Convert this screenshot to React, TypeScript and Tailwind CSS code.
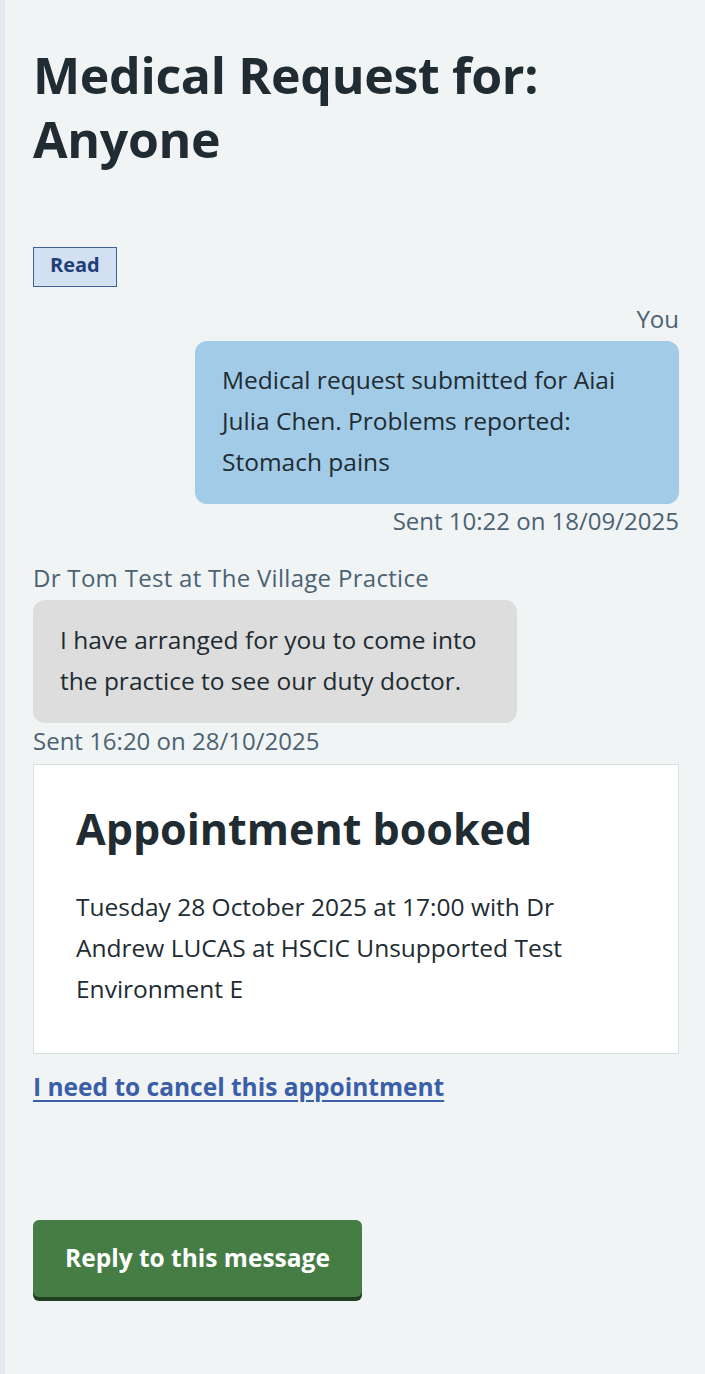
import React from "react";

export default function App() {
  return (
    <div
      className="min-h-[1374px] w-full bg-[#f0f4f5] border-l-[5px] border-[#e6eaf0] text-[#212b32]"
      style={{ fontFamily: "'Open Sans', 'Noto Sans', sans-serif" }}
    >
      <div className="pl-[28px] pr-[26px] pt-[43px] pb-[40px]">
        <h1 className="text-[50px] leading-[64px] font-bold tracking-[-0.3px]">
          Medical Request for:
          <br />
          Anyone
        </h1>

        <div className="mt-[76px]">
          <span className="inline-block border border-[#41609a] bg-[#d3e0f1] text-[#1f3f77] font-bold text-[20px] leading-[24px] px-[16px] pt-[5px] pb-[9px]">
            Read
          </span>
        </div>

        <div className="mt-[18px] flex flex-col items-end">
          <div className="text-[#4c6272] text-[24px] leading-[28px]">You</div>
          <div className="mt-[8px] w-[484px] rounded-[12px] bg-[#a2cbe8] pl-[27px] pr-[16px] pt-[18px] pb-[22px] text-[24.5px] leading-[41px]">
            Medical request submitted for Aiai
            <br />
            Julia Chen. Problems reported:
            <br />
            Stomach pains
          </div>
          <div className="mt-[3px] text-[#4c6272] text-[24px] leading-[28px]">
            Sent 10:22 on 18/09/2025
          </div>
        </div>

        <div className="mt-[29px] flex flex-col items-start">
          <div className="text-[#4c6272] text-[24px] leading-[28px] tracking-[0.3px]">
            Dr Tom Test at The Village Practice
          </div>
          <div className="mt-[8px] w-[484px] rounded-[12px] bg-[#dddddd] pl-[27px] pr-[16px] pt-[19px] pb-[22px] text-[24.5px] leading-[41px]">
            I have arranged for you to come into
            <br />
            the practice to see our duty doctor.
          </div>
          <div className="mt-[4px] text-[#4c6272] text-[24px] leading-[28px]">
            Sent 16:20 on 28/10/2025
          </div>
        </div>

        <div className="mt-[9px] bg-white border border-[#d8dde0] pl-[42px] pr-[30px] pt-[36px] pb-[44px]">
          <h2 className="text-[43px] leading-[56px] font-bold">Appointment booked</h2>
          <p className="mt-[29px] text-[24.5px] leading-[41px]">
            Tuesday 28 October 2025 at 17:00 with Dr
            <br />
            Andrew LUCAS at HSCIC Unsupported Test
            <br />
            Environment E
          </p>
        </div>

        <div className="mt-[17px]">
          <a
            href="#"
            className="text-[#3a5ea8] font-bold text-[24.5px] leading-[32px] underline underline-offset-[4px] decoration-[2px]"
          >
            I need to cancel this appointment
          </a>
        </div>

        <div className="mt-[117px]">
          <button className="h-[77px] px-[32px] rounded-[6px] bg-[#457d44] text-white font-bold text-[24.5px] shadow-[0_4px_0_#213f20]">
            Reply to this message
          </button>
        </div>
      </div>
    </div>
  );
}
